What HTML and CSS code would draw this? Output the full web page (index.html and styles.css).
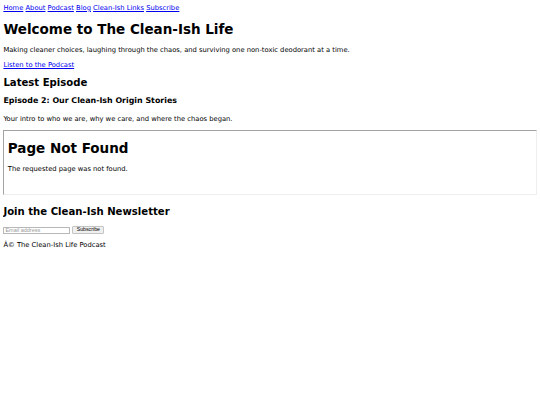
FILE: index.html
```html
<!DOCTYPE html>
<html>
<head>
<meta charset="utf-8">
<title>The Clean-Ish Life</title>
<link rel="stylesheet" href="styles.css">
</head>
<body>
<nav class="nav">
  <a href="#">Home</a>
  <a href="#">About</a>
  <a href="#">Podcast</a>
  <a href="#">Blog</a>
  <a href="#">Clean-Ish Links</a>
  <a href="#">Subscribe</a>
</nav>
<h1 class="title">Welcome to The Clean-Ish Life</h1>
<p class="text">Making cleaner choices, laughing through the chaos, and surviving one non-toxic deodorant at a time.</p>
<p class="text"><a href="#">Listen to the Podcast</a></p>
<h2 class="section">Latest Episode</h2>
<h3 class="episode">Episode 2: Our Clean-Ish Origin Stories</h3>
<p class="text">Your intro to who we are, why we care, and where the chaos began.</p>
<div class="frame">
  <h1 class="title">Page Not Found</h1>
  <p class="text">The requested page was not found.</p>
</div>
<h2 class="section">Join the Clean-Ish Newsletter</h2>
<form class="signup">
  <input class="email" type="email" placeholder="Email address">
  <button class="btn" type="button">Subscribe</button>
</form>
<p class="text footer">Â© The Clean-Ish Life Podcast</p>
</body>
</html>
```

FILE: styles.css
```css
html, body {
  background: #fff;
}
body {
  margin: 3.9px 3.4px 3.4px;
  font-family: "DejaVu Sans", sans-serif;
  font-size: 6.75px;
  line-height: 8px;
  color: #000;
}
a {
  color: #0000ee;
}
.title {
  font-size: 13.5px;
  line-height: 16px;
  font-weight: bold;
  margin: 9.2px 0 9.4px;
}
.section {
  font-size: 10.125px;
  line-height: 11.8px;
  font-weight: bold;
  margin: 8.2px 0;
}
.episode {
  font-size: 7.9px;
  line-height: 8.86px;
  font-weight: bold;
  margin: 8.4px 0;
}
.text {
  margin: 6.6px 0;
}
.frame {
  width: 100%;
  height: 65px;
  margin: 7.3px 0 11.1px;
  border-style: solid;
  border-width: 1px;
  border-color: #a3a3a3 #eeeeee #eeeeee #a3a3a3;
  padding: 0 3.4px;
  box-sizing: border-box;
  overflow: hidden;
}
.frame .title {
  margin-top: 9.1px;
}
.signup {
  display: flex;
  align-items: center;
  gap: 2.3px;
  margin: 8.2px 0 0;
  height: 8px;
}
.email {
  box-sizing: border-box;
  width: 66.5px;
  height: 7px;
  padding: 0 1px;
  margin: 0;
  font-family: "Liberation Sans", Arial, sans-serif;
  font-size: 5.5px;
  line-height: 5px;
  border: 1px solid #b8b8b8;
  border-radius: 0.5px;
  background: #fff;
}
.email::placeholder {
  color: #9a9a9a;
}
.btn {
  box-sizing: border-box;
  width: 32.3px;
  height: 8px;
  padding: 0;
  margin: 0;
  font-family: "Liberation Sans", Arial, sans-serif;
  font-size: 5.25px;
  line-height: 1;
  color: #000;
  border: 1px solid #c4c4c4;
  border-radius: 1px;
  background: #efefef;
}
.footer {
  margin-top: 7px;
}
```
